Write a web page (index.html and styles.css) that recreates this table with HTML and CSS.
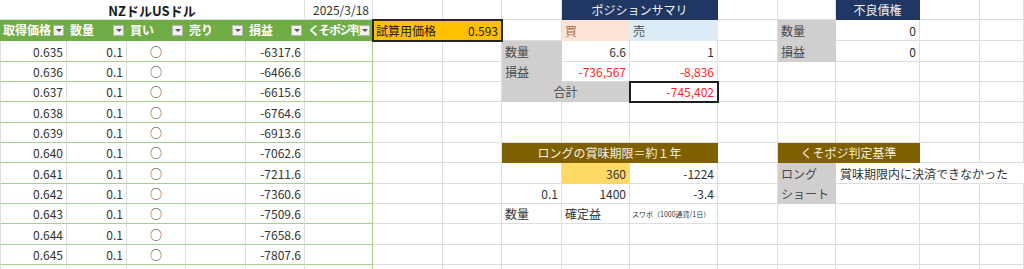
FILE: index.html
```html
<!DOCTYPE html>
<html lang="ja">
<head>
<meta charset="utf-8">
<title>NZドルUSドル</title>
<link rel="stylesheet" href="styles.css">
</head>
<body>
<table class="sheet">
  <colgroup>
    <col class="w67"><col class="w60"><col class="w59"><col class="w60"><col class="w59"><col class="w68">
    <col class="w70"><col class="w59"><col class="w60"><col class="w68"><col class="w88"><col class="w60">
    <col class="w58"><col class="w84"><col class="w60"><col class="w44">
  </colgroup>
  <tr class="h20">
    <td colspan="5" class="title">NZドルUSドル</td>
    <td class="num">2025/3/18</td>
    <td class="ob"></td><td></td><td></td>
    <td colspan="2" class="navy">ポジションサマリ</td>
    <td></td><td></td>
    <td class="navy">不良債権</td>
    <td></td><td></td>
  </tr>
  <tr class="h21">
    <td class="hd"><div class="hw"><span class="ht">取得価格</span><span class="fb"></span></div></td>
    <td class="hd"><div class="hw"><span class="ht">数量</span><span class="fb"></span></div></td>
    <td class="hd"><div class="hw"><span class="ht">買い</span><span class="fb"></span></div></td>
    <td class="hd"><div class="hw"><span class="ht">売り</span><span class="fb"></span></div></td>
    <td class="hd"><div class="hw"><span class="ht">損益</span><span class="fb"></span></div></td>
    <td class="hd"><div class="hw"><span class="ht clip">くそポジ判定</span><span class="fb"></span></div></td>
    <td colspan="2" class="calc"><div class="cw"><span>試算用価格</span><span>0.593</span></div></td>
    <td></td>
    <td class="buy">買</td>
    <td class="sell">売</td>
    <td></td>
    <td class="lbl">数量</td>
    <td class="num">0</td>
    <td></td><td></td>
  </tr>
  <tr class="h21">
    <td class="t a num">0.635</td><td class="t num">0.1</td><td class="t ctr">○</td><td class="t"></td><td class="t num">-6317.6</td><td class="t tend"></td>
    <td></td><td></td>
    <td class="lbl">数量</td><td class="num">6.6</td><td class="num">1</td>
    <td></td>
    <td class="lbl">損益</td><td class="num">0</td>
    <td></td><td></td>
  </tr>
  <tr class="h20">
    <td class="t a num">0.636</td><td class="t num">0.1</td><td class="t ctr">○</td><td class="t"></td><td class="t num">-6466.6</td><td class="t tend"></td>
    <td></td><td></td>
    <td class="lbl">損益</td><td class="num red">-736,567</td><td class="num red">-8,836</td>
    <td></td><td></td><td></td><td></td><td></td>
  </tr>
  <tr class="h20">
    <td class="t a num">0.637</td><td class="t num">0.1</td><td class="t ctr">○</td><td class="t"></td><td class="t num">-6615.6</td><td class="t tend"></td>
    <td></td><td></td>
    <td colspan="2" class="lbl ctr">合計</td><td class="num red total">-745,402</td>
    <td></td><td></td><td></td><td></td><td></td>
  </tr>
  <tr class="h21">
    <td class="t a num">0.638</td><td class="t num">0.1</td><td class="t ctr">○</td><td class="t"></td><td class="t num">-6764.6</td><td class="t tend"></td>
    <td></td><td></td><td></td><td></td><td></td><td></td><td></td><td></td><td></td><td></td>
  </tr>
  <tr class="h20">
    <td class="t a num">0.639</td><td class="t num">0.1</td><td class="t ctr">○</td><td class="t"></td><td class="t num">-6913.6</td><td class="t tend"></td>
    <td></td><td></td><td></td><td></td><td></td><td></td><td></td><td></td><td></td><td></td>
  </tr>
  <tr class="h20">
    <td class="t a num">0.640</td><td class="t num">0.1</td><td class="t ctr">○</td><td class="t"></td><td class="t num">-7062.6</td><td class="t tend"></td>
    <td></td><td></td>
    <td colspan="3" class="brown">ロングの賞味期限＝約１年</td>
    <td></td>
    <td colspan="2" class="brown">くそポジ判定基準</td>
    <td></td><td></td>
  </tr>
  <tr class="h21">
    <td class="t a num">0.641</td><td class="t num">0.1</td><td class="t ctr">○</td><td class="t"></td><td class="t num">-7211.6</td><td class="t tend"></td>
    <td></td><td></td>
    <td></td><td class="num yellow">360</td><td class="num">-1224</td>
    <td></td>
    <td class="lbl">ロング</td>
    <td class="over">賞味期限内に決済できなかった</td>
    <td class="nr"></td><td class="nr"></td>
  </tr>
  <tr class="h20">
    <td class="t a num">0.642</td><td class="t num">0.1</td><td class="t ctr">○</td><td class="t"></td><td class="t num">-7360.6</td><td class="t tend"></td>
    <td></td><td></td>
    <td class="num">0.1</td><td class="num">1400</td><td class="num">-3.4</td>
    <td></td>
    <td class="lbl">ショート</td>
    <td></td><td></td><td></td>
  </tr>
  <tr class="h20">
    <td class="t a num">0.643</td><td class="t num">0.1</td><td class="t ctr">○</td><td class="t"></td><td class="t num">-7509.6</td><td class="t tend"></td>
    <td></td><td></td>
    <td>数量</td><td>確定益</td><td class="tiny">スワポ（1000通貨/1日）</td>
    <td></td><td></td><td></td><td></td><td></td>
  </tr>
  <tr class="h21">
    <td class="t a num">0.644</td><td class="t num">0.1</td><td class="t ctr">○</td><td class="t"></td><td class="t num">-7658.6</td><td class="t tend"></td>
    <td></td><td></td><td></td><td></td><td></td><td></td><td></td><td></td><td></td><td></td>
  </tr>
  <tr class="h20">
    <td class="t a num">0.645</td><td class="t num">0.1</td><td class="t ctr">○</td><td class="t"></td><td class="t num">-7807.6</td><td class="t tend"></td>
    <td></td><td></td><td></td><td></td><td></td><td></td><td></td><td></td><td></td><td></td>
  </tr>
  <tr class="h20">
    <td class="t a"></td><td class="t"></td><td class="t"></td><td class="t"></td><td class="t"></td><td class="t tend"></td>
    <td></td><td></td><td></td><td></td><td></td><td></td><td></td><td></td><td></td><td></td>
  </tr>
</table>
</body>
</html>
```
FILE: styles.css
```css
html, body {
  margin: 0;
  padding: 0;
  background: #ffffff;
}

body {
  font-family: "Noto Sans CJK JP", "Noto Sans", sans-serif;
  font-size: 12px;
  color: #333333;
  overflow: hidden;
}

.sheet {
  border-collapse: separate;
  border-spacing: 0;
  table-layout: fixed;
  width: 1024px;
}

.w44 { width: 44px; }
.w58 { width: 58px; }
.w59 { width: 59px; }
.w60 { width: 60px; }
.w67 { width: 67px; }
.w68 { width: 68px; }
.w70 { width: 70px; }
.w84 { width: 84px; }
.w88 { width: 88px; }

.h20 { height: 20px; }
.h21 { height: 21px; }

.sheet td {
  box-sizing: border-box;
  padding: 1px 3px 0 3px;
  border-right: 1px solid #dedede;
  border-bottom: 1px solid #dedede;
  white-space: nowrap;
  overflow: hidden;
  line-height: 1;
  vertical-align: middle;
  text-align: left;
}

.sheet td.num { text-align: right; }
.sheet td.ctr { text-align: center; }
.red { color: #ff1f1f; }

/* title row */
.sheet td.title {
  text-align: center;
  font-weight: 700;
  font-size: 13px;
  color: #1a1a1a;
}

/* left table */
.sheet td.t { border-bottom-color: #a9d08e; }
.sheet td.tend { border-right-color: #a9d08e; }
.sheet td.a { border-left: 1px solid #dedede; }

.sheet td.hd {
  background: #70ad47;
  border-right-color: #70ad47;
  border-bottom-color: #70ad47;
  padding: 0 2px 0 3px;
  color: #ffffff;
  font-weight: 700;
}
.sheet td.hd:nth-child(6) { border-right-color: #a9d08e; }

.hw {
  display: flex;
  align-items: center;
}
.ht {
  flex: none;
  margin-right: auto;
  white-space: nowrap;
}
.ht.clip {
  flex: 1;
  min-width: 0;
  overflow: hidden;
  letter-spacing: -1.5px;
}
.fb {
  flex: none;
  width: 11px;
  height: 11px;
  box-sizing: border-box;
  background: #f2f2f2;
  border: 1px solid #b4b4b4;
  display: flex;
  align-items: center;
  justify-content: center;
}
.fb::after {
  content: "";
  border-left: 3px solid transparent;
  border-right: 3px solid transparent;
  border-top: 3px solid #555555;
}

/* calc price box */
.sheet td.calc {
  background: #ffc000;
  border-right-color: #ffc000;
  border-bottom-color: #ffc000;
  outline: 2px solid #262626;
  outline-offset: -1px;
  color: #1a1a1a;
}
.cw {
  display: flex;
  justify-content: space-between;
}

/* headers */
.sheet td.navy {
  background: #203764;
  border-right-color: #203764;
  border-bottom-color: #203764;
  color: #f2f2f2;
  text-align: center;
}
.sheet td.brown {
  background: #7f6000;
  border-right-color: #7f6000;
  border-bottom-color: #7f6000;
  color: #f3eee4;
  text-align: center;
}

.sheet td.buy {
  background: #fce4d6;
  border-right-color: #fce4d6;
  border-bottom-color: #fce4d6;
  color: #a86b4a;
}
.sheet td.sell {
  background: #ddebf7;
  border-right-color: #ddebf7;
  border-bottom-color: #ddebf7;
  color: #4a4f55;
}

.sheet td.lbl {
  background: #d0cece;
  border-right-color: #d0cece;
  border-bottom-color: #d0cece;
  color: #4a4a4a;
}

.sheet td.total {
  outline: 2px solid #1f1f1f;
  outline-offset: -1px;
}

.sheet td.yellow {
  background: #ffd966;
  border-right-color: #ffd966;
  border-bottom-color: #ffd966;
}

.sheet td.over {
  overflow: visible;
  border-right-color: transparent;
  padding-left: 4px;
}
.sheet td.nr { border-right-color: transparent; }

.sheet td.tiny {
  font-size: 7px;
  padding-left: 2px;
}
```
